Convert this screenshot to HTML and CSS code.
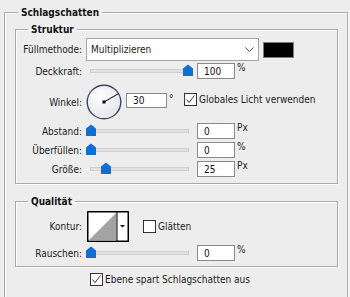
FILE: index.html
```html
<!DOCTYPE html>
<html lang="de">
<head>
  <meta charset="utf-8">
  <title>Schlagschatten</title>
  <link rel="stylesheet" href="styles.css">
</head>
<body>
  <fieldset class="group outer">
    <legend>Schlagschatten</legend>

    <fieldset class="group inner">
      <legend>Struktur</legend>

      <div class="row row-blend">
        <span class="label">Füllmethode:</span>
        <div class="select">
          <span>Multiplizieren</span>
          <svg class="chevron" width="9" height="5" viewBox="0 0 9 5"><path d="M0.5 0.5 L4.5 4.5 L8.5 0.5" fill="none" stroke="#555" stroke-width="1"/></svg>
        </div>
        <span class="swatch"></span>
      </div>

      <div class="row row-opacity">
        <span class="label">Deckkraft:</span>
        <div class="slider">
          <div class="track"></div>
          <svg class="thumb" style="left: 97px" width="10" height="12" viewBox="0 0 10 12"><path d="M0 12 V4.5 L5 0.5 L10 4.5 V12 Z" fill="#0f6fd4"/></svg>
        </div>
        <input class="num" type="text" value="100">
        <span class="unit">%</span>
      </div>

      <div class="row row-angle">
        <span class="label">Winkel:</span>
        <svg class="dial" width="36" height="36" viewBox="0 0 36 36">
          <defs>
            <radialGradient id="dialFill" cx="40%" cy="35%" r="70%">
              <stop offset="0" stop-color="#ffffff"/>
              <stop offset="1" stop-color="#e3e3ea"/>
            </radialGradient>
          </defs>
          <circle cx="18" cy="18" r="16.8" fill="url(#dialFill)" stroke="#3f4463" stroke-width="1.4"/>
          <line x1="18" y1="18" x2="32.5" y2="9.6" stroke="#000" stroke-width="1"/>
          <rect x="16.5" y="16.5" width="3" height="3" fill="#000"/>
        </svg>
        <input class="num num-angle" type="text" value="30">
        <span class="unit deg">°</span>
        <span class="check check-top">
          <span class="box"><svg width="11" height="11" viewBox="0 0 11 11"><path d="M1.5 5.5 L4 8.5 L9.5 1.5" fill="none" stroke="#333" stroke-width="1"/></svg></span>
          Globales Licht verwenden
        </span>
      </div>

      <div class="row">
        <span class="label">Abstand:</span>
        <div class="slider">
          <div class="track"></div>
          <svg class="thumb" style="left: 0px" width="10" height="12" viewBox="0 0 10 12"><path d="M0 12 V4.5 L5 0.5 L10 4.5 V12 Z" fill="#0f6fd4"/></svg>
        </div>
        <input class="num" type="text" value="0">
        <span class="unit">Px</span>
      </div>

      <div class="row">
        <span class="label">Überfüllen:</span>
        <div class="slider">
          <div class="track"></div>
          <svg class="thumb" style="left: 0px" width="10" height="12" viewBox="0 0 10 12"><path d="M0 12 V4.5 L5 0.5 L10 4.5 V12 Z" fill="#0f6fd4"/></svg>
        </div>
        <input class="num" type="text" value="0">
        <span class="unit">%</span>
      </div>

      <div class="row">
        <span class="label">Größe:</span>
        <div class="slider">
          <div class="track"></div>
          <svg class="thumb" style="left: 15px" width="10" height="12" viewBox="0 0 10 12"><path d="M0 12 V4.5 L5 0.5 L10 4.5 V12 Z" fill="#0f6fd4"/></svg>
        </div>
        <input class="num" type="text" value="25">
        <span class="unit">Px</span>
      </div>
    </fieldset>

    <fieldset class="group inner quality">
      <legend>Qualität</legend>

      <div class="row row-contour">
        <span class="label">Kontur:</span>
        <svg class="contour" width="42" height="31" viewBox="0 0 42 31">
          <rect x="0.75" y="0.75" width="40.5" height="29.5" fill="#fff" stroke="#000" stroke-width="1.5"/>
          <polygon points="1.5,29.5 29.5,1.5 29.5,29.5" fill="#a3a3a3"/>
          <line x1="30" y1="0" x2="30" y2="31" stroke="#000" stroke-width="1"/>
          <polygon points="33,14 38,14 35.5,16.5" fill="#000"/>
        </svg>
        <span class="check check-smooth">
          <span class="box"></span>
          Glätten
        </span>
      </div>

      <div class="row">
        <span class="label">Rauschen:</span>
        <div class="slider">
          <div class="track"></div>
          <svg class="thumb" style="left: 0px" width="10" height="12" viewBox="0 0 10 12"><path d="M0 12 V4.5 L5 0.5 L10 4.5 V12 Z" fill="#0f6fd4"/></svg>
        </div>
        <input class="num" type="text" value="0">
        <span class="unit">%</span>
      </div>
    </fieldset>

    <div class="row row-knockout">
      <span class="check">
        <span class="box"><svg width="11" height="11" viewBox="0 0 11 11"><path d="M1.5 5.5 L4 8.5 L9.5 1.5" fill="none" stroke="#333" stroke-width="1"/></svg></span>
        Ebene spart Schlagschatten aus
      </span>
    </div>
  </fieldset>
</body>
</html>
```

FILE: styles.css
```css
body {
  margin: 0;
  background-color: #ededed;
  font-family: "DejaVu Sans Condensed", "DejaVu Sans", sans-serif;
  font-stretch: condensed;
  font-size: 10px;
  color: #1b1b1b;
}

.group {
  margin: 0;
  border: 1px solid #a9a9a9;
  box-shadow: inset 1px 1px 0 #fff, 1px 1px 0 #fff;
  min-width: 0;
}

.group legend {
  padding: 0 3px;
  font-weight: bold;
  line-height: 13px;
  color: #111;
}

.outer {
  margin: 6px 2px 0 4px;
  padding: 4px 9px 20px 10px;
}

.outer > legend {
  margin-left: 3px;
}

.inner {
  padding: 2px 6px 6px 6px;
}

.inner > legend {
  margin-left: 6px;
}

.quality {
  margin-top: 11px;
  padding-top: 3px;
  padding-bottom: 5px;
}

.row {
  display: flex;
  align-items: center;
  height: 16px;
  margin-top: 3px;
}

.label {
  flex-shrink: 0;
  width: 60px;
  margin-right: 4px;
  text-align: right;
}

.row-blend {
  height: 23px;
  margin-top: 0;
}

.select {
  display: flex;
  align-items: center;
  justify-content: space-between;
  box-sizing: border-box;
  width: 173px;
  height: 23px;
  padding: 0 4px 0 4px;
  background-color: #fff;
  border: 1px solid #a5a5a5;
}

.swatch {
  box-sizing: border-box;
  width: 31px;
  height: 16px;
  margin-left: 4px;
  background-color: #000;
  border: 1px solid #7d7d7d;
}

.row-opacity {
  margin-top: 2px;
}

.slider {
  position: relative;
  box-sizing: border-box;
  width: 107px;
  height: 16px;
  padding: 0 4px;
}

.track {
  height: 2px;
  margin-top: 6px;
  background-color: #e2e2e2;
  border: 1px solid #d0d0d0;
}

.thumb {
  position: absolute;
  top: 1px;
}

.num {
  box-sizing: border-box;
  width: 38px;
  height: 16px;
  margin: 0 0 0 4px;
  padding: 0 0 0 6px;
  font-family: inherit;
  font-stretch: condensed;
  font-size: 10px;
  color: #111;
  background-color: #fff;
  border: 1px solid #8a8a8a;
  outline: none;
}

.unit {
  align-self: flex-start;
  margin: -1px 0 0 2px;
  line-height: 12px;
}

.row-angle {
  height: 36px;
  margin-top: 5px;
}

.num-angle {
  align-self: flex-start;
  width: 41px;
  height: 15px;
  margin-top: 9px;
}

.deg {
  width: 15px;
  margin-top: 9px;
}

.check {
  display: flex;
  align-items: center;
  gap: 2px;
}

.check-top {
  align-self: flex-start;
  margin-top: 9px;
}

.box {
  display: flex;
  align-items: center;
  justify-content: center;
  box-sizing: border-box;
  width: 13px;
  height: 13px;
  background-color: #fff;
  border: 1px solid #333;
}

.row-contour {
  height: 31px;
  margin-top: 0;
}

.contour {
  margin-left: 1px;
}

.check-smooth {
  margin-left: 14px;
}

.row-knockout {
  height: 13px;
  margin-top: 6px;
  padding-left: 75px;
}
```
